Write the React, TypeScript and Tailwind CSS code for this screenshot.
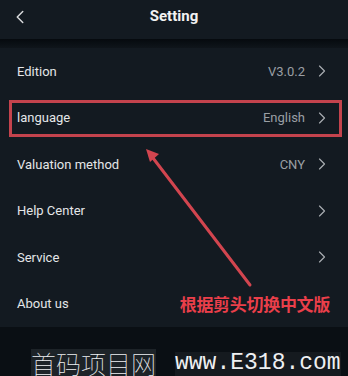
import { ChevronLeft, ChevronRight } from "lucide-react";

const rows = [
  { label: "Edition", value: "V3.0.2" },
  { label: "language", value: "English" },
  { label: "Valuation method", value: "CNY" },
  { label: "Help Center", value: "" },
  { label: "Service", value: "" },
];

export default function App() {
  return (
    <main
      className="relative w-[348px] h-[376px] overflow-hidden bg-[#0a0f14] text-white"
      style={{ fontFamily: "Roboto, 'Noto Sans', sans-serif" }}
    >
      <header className="h-[39px] bg-[#131a21] flex items-center px-[9px] pb-[6px]">
        <ChevronLeft className="w-[22px] h-[22px] text-[#d8dadc]" strokeWidth={1.6} />
        <h1 className="flex-1 text-center text-[15px] font-bold text-[#f2f2f2] pr-[22px]">Setting</h1>
      </header>

      <div className="h-[9px] bg-gradient-to-b from-[#060a0e] to-[#0f151b]" />

      <section className="bg-[#131a21]">
        {rows.map((r) => (
          <div
            key={r.label}
            className="relative h-[46.5px] flex items-center pl-[17px] pr-[16px]"
          >
            <span className="text-[13px] text-[#e4e6e8] flex-1">{r.label}</span>
            {r.value && (
              <span className="text-[13px] text-[#9a9fa4] mr-[7px]">{r.value}</span>
            )}
            <ChevronRight className="w-[20px] h-[20px] text-[#a9adb1]" strokeWidth={1.4} />
            {r.label === "language" && (
              <div className="absolute left-[9px] right-[6px] top-[5px] bottom-[4px] border-[3px] border-[#c4434d]" />
            )}
          </div>
        ))}
        <div className="h-[46.5px] flex items-center pl-[17px] pr-[18px]">
          <span className="text-[13px] text-[#e4e6e8] flex-1">About us</span>
          <span
            className="text-[17px] font-bold text-[#ea3f4a] tracking-[-0.3px]"
            style={{ fontFamily: "'Noto Sans CJK SC', sans-serif" }}
          >
            根据剪头切换中文版
          </span>
        </div>
      </section>

      <div className="h-[49px] flex items-end pl-[31px] whitespace-nowrap text-[#eef0f2] leading-none">
        <span
          className="text-[25px] font-thin bg-[#2a3036]/60 pt-[2px]"
          style={{ fontFamily: "'Noto Sans CJK SC', sans-serif" }}
        >
          首码项目网
        </span>
        <span
          className="ml-[19px] text-[23px] pb-[1px] bg-[#1c2227]/60"
          style={{ fontFamily: "'Liberation Mono', monospace" }}
        >
          www.E318.com
        </span>
      </div>

      <svg className="absolute inset-0 pointer-events-none" width="348" height="376">
        <line x1="250" y1="285" x2="153" y2="158" stroke="#d2454f" strokeWidth="3" strokeLinecap="round" />
        <polygon points="146,149 159,154 150,162" fill="#d2454f" />
      </svg>
    </main>
  );
}
